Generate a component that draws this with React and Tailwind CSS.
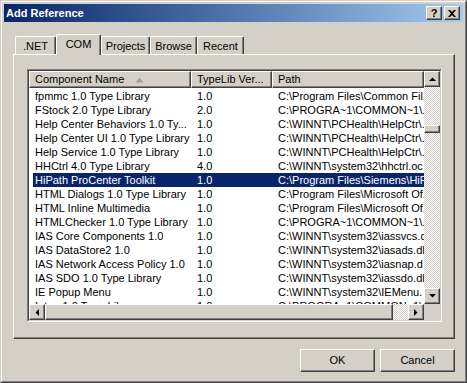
import React from "react";

const rows = [
  ["fpmmc 1.0 Type Library", "1.0", "C:\\Program Files\\Common Fil.."],
  ["FStock 2.0 Type Library", "2.0", "C:\\PROGRA~1\\COMMON~1\\."],
  ["Help Center Behaviors 1.0 Ty...", "1.0", "C:\\WINNT\\PCHealth\\HelpCtr\\."],
  ["Help Center UI 1.0 Type Library", "1.0", "C:\\WINNT\\PCHealth\\HelpCtr\\."],
  ["Help Service 1.0 Type Library", "1.0", "C:\\WINNT\\PCHealth\\HelpCtr\\."],
  ["HHCtrl 4.0 Type Library", "4.0", "C:\\WINNT\\system32\\hhctrl.oc"],
  ["HiPath ProCenter Toolkit", "1.0", "C:\\Program Files\\Siemens\\HiP."],
  ["HTML Dialogs 1.0 Type Library", "1.0", "C:\\Program Files\\Microsoft Of."],
  ["HTML Inline Multimedia", "1.0", "C:\\Program Files\\Microsoft Of."],
  ["HTMLChecker 1.0 Type Library", "1.0", "C:\\PROGRA~1\\COMMON~1\\."],
  ["IAS Core Components 1.0", "1.0", "C:\\WINNT\\system32\\iassvcs.d"],
  ["IAS DataStore2 1.0", "1.0", "C:\\WINNT\\system32\\iasads.dl"],
  ["IAS Network Access Policy 1.0", "1.0", "C:\\WINNT\\system32\\iasnap.d"],
  ["IAS SDO 1.0 Type Library", "1.0", "C:\\WINNT\\system32\\iassdo.dl"],
  ["IE Popup Menu", "1.0", "C:\\WINNT\\system32\\IEMenu."],
  ["Intan 1.0 Type Library", "1.0", "C:\\PROGRA~1\\COMMON~1\\"],
];

const raised =
  "border border-t-white border-l-white border-r-[#404040] border-b-[#404040] shadow-[inset_-1px_-1px_#808080]";

function Arrow({ dir }) {
  const pts = {
    up: "0,4 7,4 3.5,0.5",
    down: "0,0 7,0 3.5,3.5",
    left: "4,0 4,7 0.5,3.5",
    right: "0,0 0,7 3.5,3.5",
  }[dir];
  const vert = dir === "up" || dir === "down";
  return (
    <svg width={vert ? 7 : 4} height={vert ? 4 : 7} viewBox={vert ? "0 0 7 4" : "0 0 4 7"}>
      <polygon points={pts} fill="#000" />
    </svg>
  );
}

function ScrollBtn({ dir }) {
  return (
    <div className={`w-[16px] h-[16px] shrink-0 bg-[#D4D0C8] flex items-center justify-center ${raised}`}>
      <Arrow dir={dir} />
    </div>
  );
}

const dither = "bg-[repeating-conic-gradient(#D4D0C8_0_25%,#ffffff_0_50%)] bg-[length:2px_2px]";

export default function App() {
  return (
    <div className="w-[467px] h-[383px] bg-[#D4D0C8] font-['Liberation_Sans',Arial,sans-serif] text-[11px] text-black border border-t-[#D4D0C8] border-l-[#D4D0C8] border-r-[#404040] border-b-[#404040]">
      <div className="h-full border border-t-white border-l-white border-r-[#808080] border-b-[#808080] p-[2px] flex flex-col">
        {/* Title bar */}
        <div className="h-[18px] shrink-0 flex items-center bg-gradient-to-r from-[#0A246A] to-[#A6CAF0] pl-[2px] pr-[3px]">
          <span className="font-bold text-white text-[11px] leading-[13px]">Add Reference</span>
          <div className="ml-auto flex gap-[2px]">
            <div className="w-[16px] h-[14px] bg-[#D4D0C8] border border-t-white border-l-white border-r-[#404040] border-b-[#404040] shadow-[inset_-1px_-1px_#808080] flex items-center justify-center">
              <span className="font-bold text-[11px] leading-[11px] text-black">?</span>
            </div>
            <div className="w-[16px] h-[14px] bg-[#D4D0C8] border border-t-white border-l-white border-r-[#404040] border-b-[#404040] shadow-[inset_-1px_-1px_#808080] flex items-center justify-center">
              <svg width="8" height="7" viewBox="0 0 8 7">
                <path d="M0,0 H2 L4,2 L6,0 H8 L5,3.5 L8,7 H6 L4,5 L2,7 H0 L3,3.5 Z" fill="#000" />
              </svg>
            </div>
          </div>
        </div>

        {/* Tab control */}
        <div className="mt-[12px] ml-[9px] mr-[8px] flex flex-col">
          <div className="h-[20px] flex items-end pl-[2px]">
            <div className="w-[41px] h-[18px] border-t border-l border-t-white border-l-white border-r border-r-[#404040] shadow-[inset_-1px_0_#808080] rounded-tl-[2px] rounded-tr-[2px] flex justify-center pt-[3px] leading-[13px]">
              .NET
            </div>
            <div className="relative z-10 w-[45px] h-[21px] -mb-[1px] bg-[#D4D0C8] border-t border-l border-t-white border-l-white border-r border-r-[#404040] shadow-[inset_-1px_0_#808080] rounded-tl-[2px] rounded-tr-[2px] flex justify-center pt-[3px] leading-[13px]">
              COM
            </div>
            <div className="w-[49px] h-[18px] border-t border-l border-t-white border-l-white border-r border-r-[#404040] shadow-[inset_-1px_0_#808080] rounded-tl-[2px] rounded-tr-[2px] flex justify-center pt-[3px] leading-[13px]">
              Projects
            </div>
            <div className="w-[47px] h-[18px] border-t border-l border-t-white border-l-white border-r border-r-[#404040] shadow-[inset_-1px_0_#808080] rounded-tl-[2px] rounded-tr-[2px] flex justify-center pt-[3px] leading-[13px]">
              Browse
            </div>
            <div className="w-[47px] h-[18px] border-t border-l border-t-white border-l-white border-r border-r-[#404040] shadow-[inset_-1px_0_#808080] rounded-tl-[2px] rounded-tr-[2px] flex justify-center pt-[3px] leading-[13px]">
              Recent
            </div>
          </div>

          {/* Panel */}
          <div className="h-[285px] border border-t-white border-l-white border-r-[#404040] border-b-[#404040] shadow-[inset_-1px_-1px_#808080] pt-[14px] pl-[13px] pr-[12px]">
            {/* List view */}
            <div className="h-[253px] border border-t-[#808080] border-l-[#808080] border-r-white border-b-white">
              <div className="h-full bg-white border border-t-[#404040] border-l-[#404040] border-r-[#D4D0C8] border-b-[#D4D0C8] flex flex-col">
                <div className="flex flex-1 min-h-0">
                  {/* columns */}
                  <div className="flex-1 min-w-0 flex flex-col overflow-hidden">
                    <div className="h-[17px] shrink-0 flex bg-[#D4D0C8]">
                      <div className={`w-[162px] shrink-0 ${raised} flex items-center pl-[5px] leading-[13px]`}>
                        <span>Component Name</span>
                        <svg className="ml-[11px]" width="9" height="6" viewBox="0 0 9 6">
                          <polygon points="4.5,0.5 8.5,5.5 0.5,5.5" fill="#A0A0A0" />
                        </svg>
                      </div>
                      <div className={`w-[81px] shrink-0 ${raised} flex items-center pl-[5px] leading-[13px] whitespace-nowrap overflow-hidden`}>
                        TypeLib Ver...
                      </div>
                      <div className={`flex-1 ${raised} flex items-center pl-[5px] leading-[13px]`}>
                        Path
                      </div>
                    </div>
                    <div className="flex-1 min-h-0 overflow-hidden pt-[1px]">
                      {rows.map((r, i) => {
                        const sel = i === 6;
                        return (
                          <div key={i} className="h-[14px] flex leading-[14px] whitespace-nowrap">
                            <div className={`flex flex-1 ml-[4px] ${sel ? "bg-[#0A246A] text-white" : ""}`}>
                              <div className="w-[158px] shrink-0 pl-[2px] overflow-hidden">{r[0]}</div>
                              <div className="w-[81px] shrink-0 pl-[6px] overflow-hidden">{r[1]}</div>
                              <div className="flex-1 pl-[6px] overflow-hidden">{r[2]}</div>
                            </div>
                          </div>
                        );
                      })}
                    </div>
                  </div>
                  {/* vertical scrollbar */}
                  <div className={`w-[16px] shrink-0 flex flex-col ${dither}`}>
                    <ScrollBtn dir="up" />
                    <div className="h-[38px]" />
                    <div className={`h-[8px] bg-[#D4D0C8] ${raised}`} />
                    <div className="flex-1" />
                    <ScrollBtn dir="down" />
                  </div>
                </div>
                {/* horizontal scrollbar */}
                <div className="h-[16px] shrink-0 flex">
                  <div className={`flex-1 flex ${dither}`}>
                    <ScrollBtn dir="left" />
                    <div className={`flex-1 bg-[#D4D0C8] ${raised}`} />
                    <div className="w-[15px]" />
                    <ScrollBtn dir="right" />
                  </div>
                  <div className="w-[16px] bg-[#D4D0C8]" />
                </div>
              </div>
            </div>
          </div>
        </div>

        {/* Buttons */}
        <div className="mt-[10px] mr-[8px] flex justify-end gap-[5px]">
          <div className={`w-[75px] h-[23px] flex items-center justify-center leading-[13px] ${raised}`}>OK</div>
          <div className={`w-[75px] h-[23px] flex items-center justify-center leading-[13px] ${raised}`}>Cancel</div>
        </div>
      </div>
    </div>
  );
}
